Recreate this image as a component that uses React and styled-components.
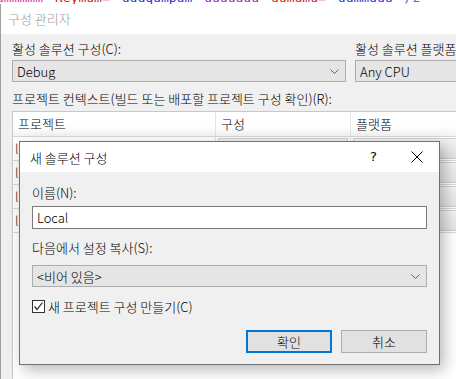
import React from 'react';
import styled, { createGlobalStyle } from 'styled-components';

const GlobalStyle = createGlobalStyle`
  html, body {
    margin: 0;
    padding: 0;
    background: #ffffff;
  }
  body {
    font-family: "Noto Sans CJK KR", "Noto Sans", sans-serif;
    font-size: 13px;
    font-weight: 300;
    color: #000;
  }
`;

const rows = [
  { name: 'lib', config: 'Debug', platform: 'Any CPU' },
  { name: 'lib', config: 'Debug', platform: 'Any CPU' },
  { name: 'lib', config: 'Debug', platform: 'Any CPU' },
  { name: 'lib', config: 'Debug', platform: 'Any CPU' },
];

const Chevron = () => (
  <svg width="9" height="5" viewBox="0 0 9 5">
    <path d="M0.5 0.5 L4.5 4.5 L8.5 0.5" fill="none" stroke="#606060" strokeWidth="1" />
  </svg>
);

const App = () => {
  return (
    <Screen>
      <GlobalStyle />
      <BehindStrip>
        <Ink $color="#e0309a">ummmmm</Ink>
        <Ink $color="#d02020">Keymum=</Ink>
        <Ink $color="#3030d0">uuuqumpum</Ink>
        <Ink $color="#a020c0">uuuuuuu</Ink>
        <Ink $color="#d02020">uumumu=</Ink>
        <Ink $color="#3030d0">uummuuu</Ink>
        <Ink $color="#6060e0">/z</Ink>
      </BehindStrip>

      <Desktop>
        <Gutter />
        <Window>
          <WindowTitle>구성 관리자</WindowTitle>
          <WindowBody>
            <Selectors>
              <Field $width="334px">
                <Label>활성 솔루션 구성(C):</Label>
                <Combo>
                  <span>Debug</span>
                  <Chevron />
                </Combo>
              </Field>
              <Field $width="140px">
                <Label>활성 솔루션 플랫폼(P):</Label>
                <Combo>
                  <span>Any CPU</span>
                </Combo>
              </Field>
            </Selectors>

            <ContextLabel>프로젝트 컨텍스트(빌드 또는 배포할 프로젝트 구성 확인)(R):</ContextLabel>

            <Grid>
              <HeaderRow>
                <HeaderCell $width="203px">프로젝트</HeaderCell>
                <HeaderCell $width="135px">구성</HeaderCell>
                <HeaderCell $width="120px">플랫폼</HeaderCell>
              </HeaderRow>
              {rows.map((r, i) => (
                <GridRow key={i}>
                  <TextCell $width="203px">{r.name}</TextCell>
                  <ComboCell $width="135px"><CellBox>{r.config}</CellBox></ComboCell>
                  <ComboCell $width="120px"><CellBox>{r.platform}</CellBox></ComboCell>
                </GridRow>
              ))}
            </Grid>
          </WindowBody>
        </Window>
      </Desktop>

      <Dialog>
        <DialogTitle>
          <span>새 솔루션 구성</span>
          <TitleButtons>
            <HelpMark>?</HelpMark>
            <svg width="12" height="12" viewBox="0 0 12 12">
              <path d="M0.5 0.5 L11.5 11.5 M11.5 0.5 L0.5 11.5" stroke="#000" strokeWidth="1" />
            </svg>
          </TitleButtons>
        </DialogTitle>
        <DialogBody>
          <Label>이름(N):</Label>
          <TextInput>Local</TextInput>
          <Label $top="11px">다음에서 설정 복사(S):</Label>
          <Combo $top="6px">
            <span>&lt;비어 있음&gt;</span>
            <Chevron />
          </Combo>
          <CheckRow>
            <CheckBox>
              <svg width="11" height="11" viewBox="0 0 11 11">
                <path d="M1.5 5.5 L4 8.5 L9.5 1.5" fill="none" stroke="#222" strokeWidth="1.2" />
              </svg>
            </CheckBox>
            <span>새 프로젝트 구성 만들기(C)</span>
          </CheckRow>
          <ButtonRow>
            <Button $primary>확인</Button>
            <Button>취소</Button>
          </ButtonRow>
        </DialogBody>
      </Dialog>
    </Screen>
  );
};

const Screen = styled.div`
  position: relative;
  width: 456px;
  height: 379px;
  overflow: hidden;
  background: #ffffff;
`;

const BehindStrip = styled.div`
  height: 4px;
  overflow: hidden;
  white-space: nowrap;
  display: flex;
  gap: 12px;
  margin-left: -4px;
  font-family: "DejaVu Sans Mono", monospace;
  font-size: 13px;
  font-weight: 400;
  line-height: 13px;
`;

const Ink = styled.span`
  display: block;
  margin-top: -9px;
  color: ${p => p.$color};
`;

const Desktop = styled.div`
  display: flex;
  height: 375px;
`;

const Gutter = styled.div`
  width: 2px;
  background: #ffffff;
`;

const Window = styled.div`
  flex: 1;
  display: flex;
  flex-direction: column;
  border-left: 1px solid #a0a0a0;
`;

const WindowTitle = styled.div`
  height: 30px;
  flex: none;
  background: #ffffff;
  color: #9a9a9a;
  line-height: 30px;
  padding-left: 7px;
`;

const WindowBody = styled.div`
  flex: 1;
  background: #f0f0f0;
  padding: 7px 0 0 11px;
  overflow: hidden;
`;

const Selectors = styled.div`
  display: flex;
  gap: 9px;
  width: 500px;
`;

const Field = styled.div`
  width: ${p => p.$width};
  flex: none;
  display: flex;
  flex-direction: column;
`;

const Label = styled.div`
  line-height: 16px;
  height: 16px;
  margin-top: ${p => p.$top || '0'};
  margin-bottom: 3px;
  white-space: nowrap;
`;

const Combo = styled.div`
  box-sizing: border-box;
  height: 22px;
  margin-top: ${p => p.$top || '0'};
  background: #e5e5e5;
  border: 1px solid #adadad;
  display: flex;
  align-items: center;
  justify-content: space-between;
  padding: 0 6px 0 4px;
  white-space: nowrap;
`;

const ContextLabel = styled.div`
  margin-top: 9px;
  line-height: 16px;
  height: 16px;
  white-space: nowrap;
`;

const Grid = styled.div`
  margin-top: 4px;
  width: 520px;
  height: 300px;
  background: #ffffff;
  border-top: 1px solid #c8c8c8;
  border-left: 1px solid #c8c8c8;
`;

const HeaderRow = styled.div`
  display: flex;
  height: 24px;
  border-bottom: 1px solid #d5d5d5;
  background: linear-gradient(#ffffff 55%, #f3f3f3);
`;

const HeaderCell = styled.div`
  box-sizing: border-box;
  width: ${p => p.$width};
  flex: none;
  padding-left: 5px;
  line-height: 24px;
  border-right: 1px solid #e2e2e2;
`;

const GridRow = styled.div`
  display: flex;
  height: 23px;
  border-bottom: 1px solid #d8d8d8;
`;

const TextCell = styled.div`
  box-sizing: border-box;
  width: ${p => p.$width};
  flex: none;
  padding-left: 2px;
  line-height: 23px;
  color: #3a2a10;
  border-right: 1px solid #e2e2e2;
`;

const ComboCell = styled.div`
  box-sizing: border-box;
  width: ${p => p.$width};
  flex: none;
  padding: 1px 2px;
  border-right: 1px solid #e2e2e2;
`;

const CellBox = styled.div`
  box-sizing: border-box;
  height: 21px;
  border: 1px solid #cfcfcf;
  background: linear-gradient(#f2f2f2, #e2e2e2);
  line-height: 19px;
  padding-left: 4px;
`;

const Dialog = styled.div`
  position: absolute;
  left: 19px;
  top: 141px;
  width: 421px;
  height: 224px;
  box-sizing: border-box;
  border: 1px solid #707070;
  background: #f0f0f0;
  box-shadow: 4px 5px 14px rgba(0, 0, 0, 0.28);
  display: flex;
  flex-direction: column;
`;

const DialogTitle = styled.div`
  height: 30px;
  flex: none;
  background: #ffffff;
  display: flex;
  align-items: center;
  justify-content: space-between;
  padding: 0 16px 0 10px;
`;

const TitleButtons = styled.div`
  display: flex;
  align-items: center;
  gap: 34px;
`;

const HelpMark = styled.span`
  font-family: "DejaVu Sans", sans-serif;
  font-size: 13px;
  font-weight: 400;
  line-height: 14px;
`;

const DialogBody = styled.div`
  display: flex;
  flex-direction: column;
  padding: 13px 12px 0 12px;
`;

const TextInput = styled.div`
  box-sizing: border-box;
  height: 23px;
  margin-top: 2px;
  background: #ffffff;
  border: 1px solid #7a7a7a;
  padding-left: 4px;
  line-height: 21px;
`;

const CheckRow = styled.div`
  display: flex;
  align-items: center;
  gap: 3px;
  margin-top: 13px;
  height: 13px;
  line-height: 16px;
`;

const CheckBox = styled.div`
  box-sizing: border-box;
  width: 13px;
  height: 13px;
  border: 1px solid #333333;
  background: #ffffff;
  display: flex;
  align-items: center;
  justify-content: center;
`;

const ButtonRow = styled.div`
  display: flex;
  justify-content: flex-end;
  gap: 9px;
  margin-top: 17px;
`;

const Button = styled.div`
  box-sizing: border-box;
  width: 86px;
  height: 23px;
  background: #e1e1e1;
  border: ${p => (p.$primary ? '2px solid #0078d7' : '1px solid #adadad')};
  display: flex;
  align-items: center;
  justify-content: center;
`;

export default App;
